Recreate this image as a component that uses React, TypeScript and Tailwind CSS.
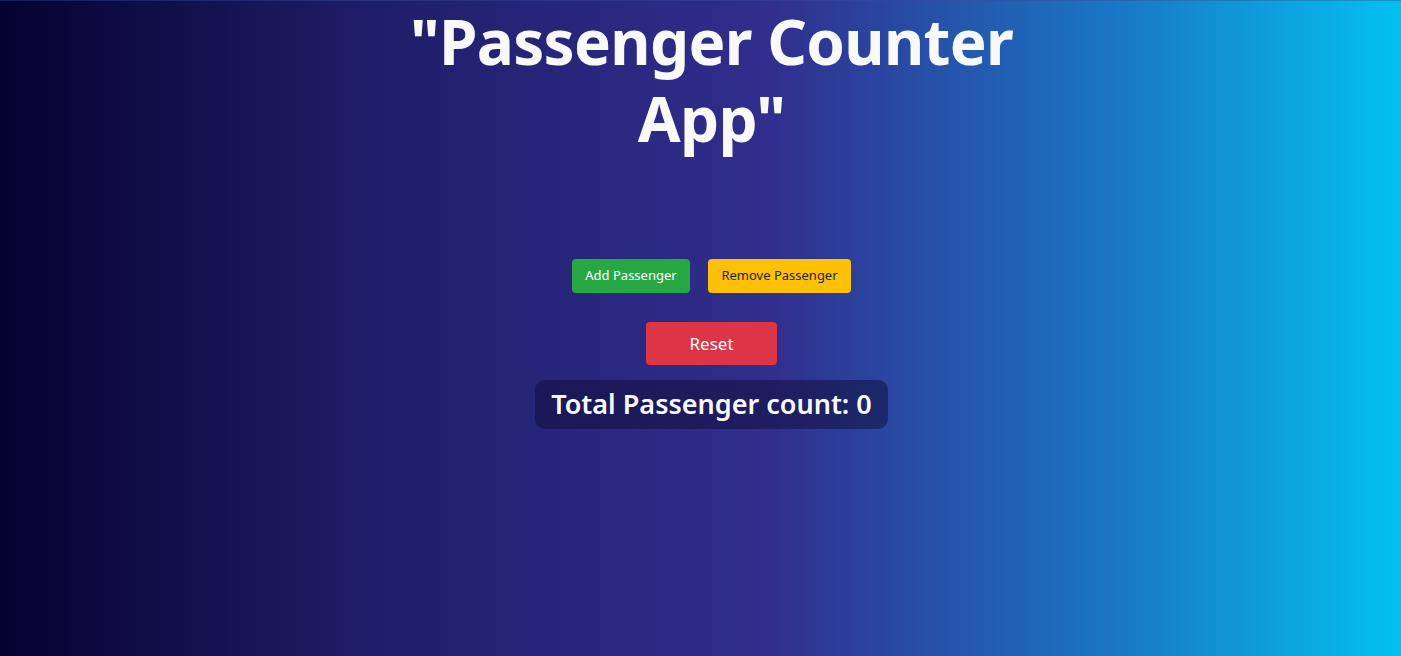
import { useState } from "react";

export default function App() {
  const [count, setCount] = useState(0);

  return (
    <div
      className="min-h-[656px] w-full pl-[22px] flex flex-col items-center text-center bg-[linear-gradient(90deg,#040230_0%,#1e1d66_25%,#312e8e_55%,#1a78c6_80%,#03c0f0_100%)] border-t border-[#3a4a9a]/40"
      style={{ fontFamily: '"Noto Sans", "Open Sans", sans-serif' }}
    >
      <h1 className="text-[62px] font-bold leading-[77px] text-[#f8f9fa] mt-[2px] tracking-[-0.7px]">
        "Passenger Counter
        <br />
        App"
      </h1>

      <div className="flex gap-[18px] mt-[102px]">
        <button
          onClick={() => setCount(count + 1)}
          className="w-[118px] h-[34px] rounded-[4px] bg-[#28a745] text-white text-[13px]"
        >
          Add Passenger
        </button>
        <button
          onClick={() => setCount(Math.max(0, count - 1))}
          className="w-[143px] h-[34px] rounded-[4px] bg-[#ffc107] text-[#212529] text-[13px]"
        >
          Remove Passenger
        </button>
      </div>

      <button
        onClick={() => setCount(0)}
        className="mt-[29px] w-[131px] h-[43px] rounded-[4px] bg-[#dc3545] text-white text-[17px]"
      >
        Reset
      </button>

      <div className="mt-[15px] h-[49px] px-[16px] flex items-center rounded-[10px] bg-[#0d0b33]/50 text-[#f8f9fa] text-[27px] font-semibold">
        Total Passenger count: {count}
      </div>
    </div>
  );
}
